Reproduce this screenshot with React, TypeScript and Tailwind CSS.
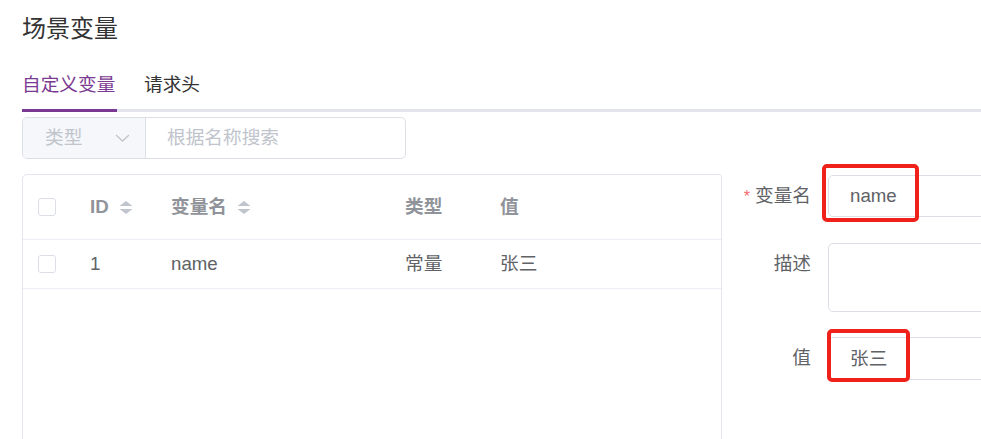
import React from "react";

const cn = "font-['Liberation_Sans','Noto_Sans_CJK_SC',sans-serif]";

const SortCaret: React.FC = () => (
  <svg width="14" height="13" viewBox="0 0 14 13" className="ml-[10px] shrink-0">
    <path d="M7 0 L13.5 5 L0.5 5 Z" fill="#c0c4cc" />
    <path d="M0.5 8 L13.5 8 L7 13 Z" fill="#c0c4cc" />
  </svg>
);

const Checkbox: React.FC = () => (
  <span className="block w-[18px] h-[18px] rounded-[3px] border border-[#dcdfe6] bg-white" />
);

const rows = [{ id: 1, name: "name", type: "常量", value: "张三" }];

const App: React.FC = () => {
  return (
    <div className={`${cn} w-full h-[439px] overflow-hidden bg-white text-[#303133]`}>
      <div className="pl-[22px] pt-[15px] text-[24px] leading-[28px] text-[#333]">场景变量</div>

      {/* tabs */}
      <div className="mt-[30px] ml-[22px] flex border-b-[3px] border-[#e4e5ec] text-[18.67px] leading-[24px]">
        <div className="w-[95px] -mb-[3px] pb-[12px] border-b-[3px] border-[#7b3a92] text-[#7b3a92]">自定义变量</div>
        <div className="ml-[27px] -mb-[3px] pb-[12px] border-b-[3px] border-transparent text-[#333]">请求头</div>
      </div>

      {/* search */}
      <div className="mt-[5px] ml-[22px] w-[384px] h-[42px] flex rounded-[5px] border border-[#dcdfe6] overflow-hidden text-[18.67px]">
        <div className="w-[123px] flex items-center justify-between bg-[#f5f7fa] border-r border-[#dcdfe6] pl-[22px] pr-[15px] text-[#c0c4cc]">
          <span>类型</span>
          <svg width="15" height="8" viewBox="0 0 15 8" fill="none">
            <path d="M1 1 L7.5 7 L14 1" stroke="#c0c4cc" strokeWidth="1.3" />
          </svg>
        </div>
        <div className="flex-1 flex items-center pl-[21px] text-[#c0c4cc]">根据名称搜索</div>
      </div>

      <div className="mt-[15px] ml-[22px] flex">
        {/* table */}
        <div className="w-[700px] h-[300px] shrink-0 rounded-tl-[5px] rounded-tr-[3px] border border-[#e4e7ed] text-[18.67px]">
          <div className="flex h-[65px] items-center border-b border-[#ebeef5] font-bold text-[#909399]">
            <div className="w-[67px] pl-[15px]"><Checkbox /></div>
            <div className="w-[81px] flex items-center">ID<SortCaret /></div>
            <div className="w-[234px] flex items-center">变量名<SortCaret /></div>
            <div className="w-[95px]">类型</div>
            <div className="flex-1">值</div>
          </div>
          {rows.map((r) => (
            <div key={r.id} className="flex h-[49px] items-center border-b border-[#ebeef5] text-[#606266]">
              <div className="w-[67px] pl-[15px]"><Checkbox /></div>
              <div className="w-[81px]">{r.id}</div>
              <div className="w-[234px]">{r.name}</div>
              <div className="w-[95px]">{r.type}</div>
              <div className="flex-1">{r.value}</div>
            </div>
          ))}
        </div>

        {/* form */}
        <div className="pt-[1px] flex flex-col gap-[25px] text-[18.67px] text-[#606266]">
          <div className="flex items-start">
            <label className="w-[89px] text-right leading-[42px]">
              <span className="text-[#f56c6c] mr-[5px] text-[16px]">*</span>变量名
            </label>
            <div className="relative ml-[17px]">
              <div className="w-[300px] h-[42px] rounded-[5px] border border-[#dcdfe6] flex items-center pl-[21px]">name</div>
              <div className="absolute left-[-6px] top-[-11px] w-[97px] h-[58px] rounded-[5px] border-[4px] border-[#f0211a]" />
            </div>
          </div>
          <div className="flex items-start">
            <label className="w-[89px] text-right leading-[42px]">描述</label>
            <div className="ml-[17px] w-[300px] h-[69px] rounded-[5px] border border-[#dcdfe6]" />
          </div>
          <div className="flex items-start">
            <label className="w-[89px] text-right leading-[42px]">值</label>
            <div className="relative ml-[17px]">
              <div className="w-[300px] h-[43px] rounded-[5px] border border-[#dcdfe6] flex items-center pl-[21px]">张三</div>
              <div className="absolute left-[-1px] top-[-8px] w-[83px] h-[53px] rounded-[5px] border-[4px] border-[#f0211a]" />
            </div>
          </div>
        </div>
      </div>
    </div>
  );
};

export default App;
